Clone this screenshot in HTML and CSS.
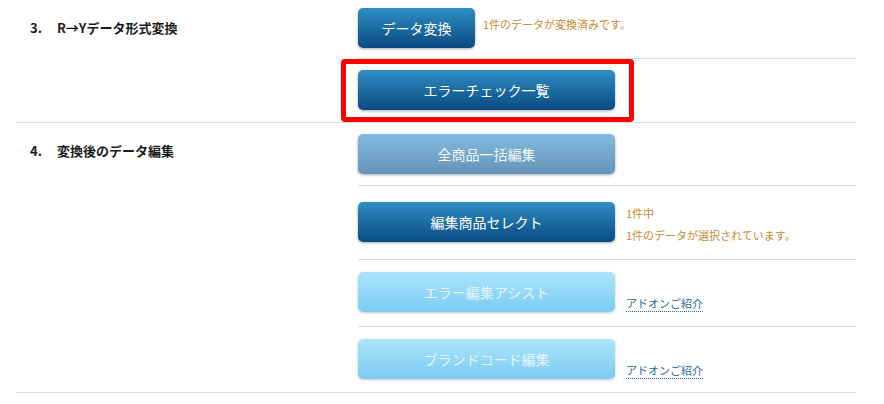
FILE: index.html
```html
<!DOCTYPE html>
<html lang="ja">
<head>
<meta charset="utf-8">
<title>データ変換</title>
<link rel="stylesheet" href="styles.css">
</head>
<body>
<div class="table">
  <div class="row">
    <div class="label"><span class="num">3.</span>R→Yデータ形式変換</div>
    <div class="cells">
      <div class="cell pad-a">
        <button class="btn dark small">データ変換</button>
        <span class="note note-top">1件のデータが変換済みです。</span>
      </div>
      <div class="cell pad-b annotated">
        <button class="btn dark">エラーチェック一覧</button>
        <div class="redbox"></div>
      </div>
    </div>
  </div>
  <div class="row">
    <div class="label"><span class="num">4.</span>変換後のデータ編集</div>
    <div class="cells">
      <div class="cell pad-c">
        <button class="btn mid">全商品一括編集</button>
      </div>
      <div class="cell pad-d">
        <button class="btn dark">編集商品セレクト</button>
        <div class="note note-block">
          <div>1件中</div>
          <div>1件のデータが選択されています。</div>
        </div>
      </div>
      <div class="cell pad-e">
        <button class="btn light">エラー編集アシスト</button>
        <a class="addon" href="#">アドオンご紹介</a>
      </div>
      <div class="cell pad-f">
        <button class="btn light">ブランドコード編集</button>
        <a class="addon" href="#">アドオンご紹介</a>
      </div>
    </div>
  </div>
</div>
</body>
</html>
```

FILE: styles.css
```css
* { box-sizing: border-box; }

html, body {
  margin: 0;
  padding: 0;
  background: #ffffff;
}

body {
  font-family: "Noto Sans CJK JP", "Noto Sans", sans-serif;
  color: #222222;
}

.table {
  width: 840px;
  margin-left: 16px;
}

.row {
  display: flex;
  border-bottom: 1px solid #dedede;
}

.label {
  width: 342px;
  flex: none;
  padding: 19px 0 0 14px;
  font-size: 13px;
  line-height: 18px;
  font-weight: bold;
  color: #1a1a1a;
  display: flex;
}

.num {
  width: 27px;
  flex: none;
}

.cells {
  flex: 1;
  display: flex;
  flex-direction: column;
}

.cell {
  display: flex;
  align-items: flex-start;
  border-top: 1px solid #dedede;
}

.cell:first-child {
  border-top: none;
}

.pad-a { padding: 8px 0 10px; }
.pad-b { padding: 11px 0 12px; }
.pad-c { padding: 11px 0 11px; }
.pad-d { padding: 16px 0 13px; }
.pad-e { padding: 12px 0 14px; }
.pad-f { padding: 12px 0 13px; }

.annotated {
  position: relative;
}

.btn {
  flex: none;
  width: 257px;
  height: 40px;
  border: none;
  border-radius: 5px;
  font-family: "Noto Sans CJK JP", "Noto Sans", sans-serif;
  font-size: 14px;
  color: #ffffff;
  padding: 0;
  box-shadow: 0 1px 3px rgba(0, 0, 0, 0.35);
  cursor: pointer;
}

.btn.small {
  width: 117px;
}

.btn.dark {
  background: linear-gradient(#2f8ec3, #0a4a82);
}

.btn.mid {
  background: linear-gradient(#82badc, #6594ba);
  color: #f2f7fb;
}

.btn.light {
  background: linear-gradient(#abe5fb, #7ccbf2);
  color: #e6f5fc;
  box-shadow: 0 1px 3px rgba(0, 0, 0, 0.22);
}

.note {
  font-size: 11px;
  line-height: 22px;
  color: #c98a30;
  margin-left: 11px;
}

.note-top {
  margin-top: 5px;
  margin-left: 8px;
}

.addon {
  align-self: flex-end;
  margin-left: 11px;
  font-size: 11px;
  line-height: 14px;
  padding-bottom: 1px;
  color: #2c6d8c;
  text-decoration: none;
  border-bottom: 1px dotted #2c6d8c;
}

.redbox {
  position: absolute;
  left: -17px;
  top: 0;
  width: 293px;
  height: 63px;
  border: 5px solid #ff0000;
  border-radius: 4px;
  pointer-events: none;
}
```
